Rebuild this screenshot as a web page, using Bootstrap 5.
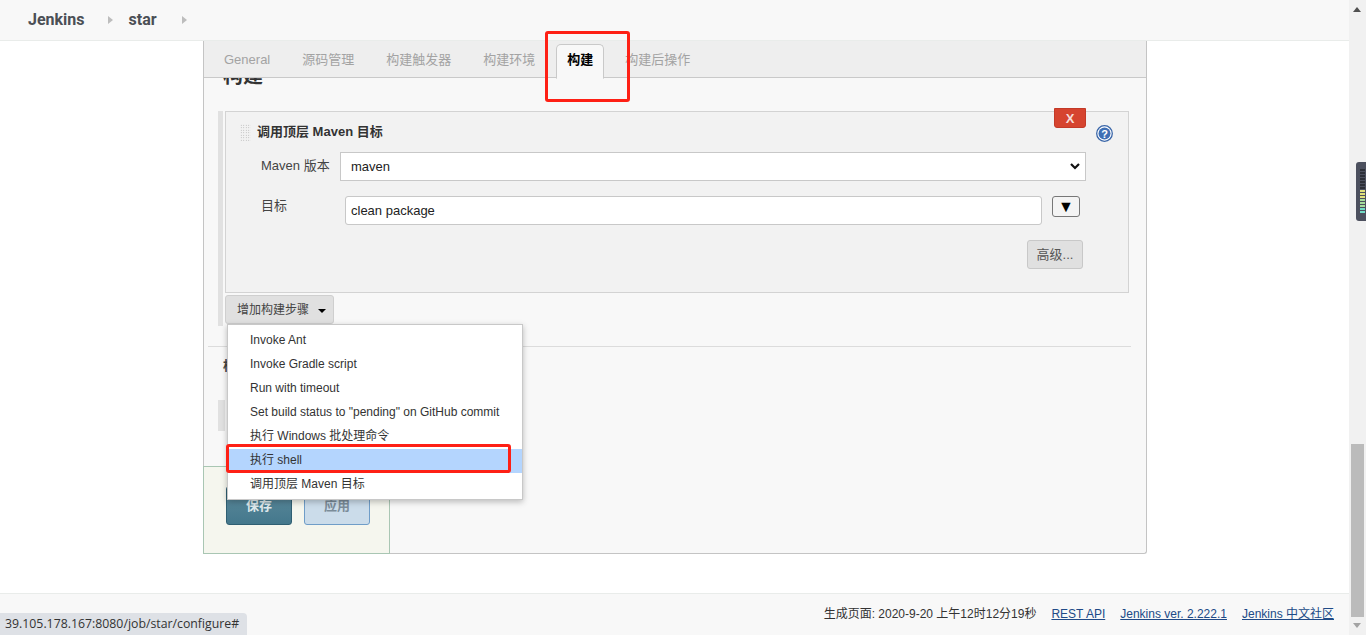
<!DOCTYPE html>
<html lang="zh"><head><meta charset="utf-8"><title>Jenkins</title>
<link href="https://cdn.jsdelivr.net/npm/bootstrap@5.3.0/dist/css/bootstrap.min.css" rel="stylesheet">
<style>
html,body{height:635px;overflow:hidden}
body{font-family:"Liberation Sans","Noto Sans CJK SC",sans-serif;font-size:13px;color:#333;background:#fff;position:relative}
.pg{width:1349px;height:635px}
.topbar{height:41px;background:#f8f8f8;border-bottom:1px solid #e9ecea;padding:0 0 0 28px;flex-wrap:nowrap;justify-content:flex-start;align-items:center;gap:0}
.crumb{font-family:Roboto,"Liberation Sans",sans-serif;font-weight:700;font-size:16px;color:#4b4f55}
.tri{width:0;height:0;border-left:5px solid #bdbdbd;border-top:4px solid transparent;border-bottom:4px solid transparent}
.crumb-gap-a{margin-left:23px}
.crumb-gap-b{margin-left:16px}
.crumb-gap-c{margin-left:25px}
.wrap{padding-left:203px}
.panel-main{width:944px;height:513px;background:#f8f8f8;border:1px solid #c4c4c4;border-top:0;border-radius:0 0 3px 3px;position:relative}
.tabsbar{height:37px;background:#eee;border-bottom:1px solid #c9c9c9;padding-left:4px;padding-top:3px;flex-wrap:nowrap;position:relative;z-index:2;gap:0}
.tabsbar .nav-link{height:34px;padding:7px 16px 0;font-size:13px;line-height:18px;color:#a3a3a3;border:0;background:transparent;border-radius:0;margin:0}
.tabsbar .nav-link.active{color:#000;font-weight:700;background:#f8f8f8;border:1px solid #c9c9c9;border-bottom:1px solid #f8f8f8;border-radius:5px 5px 0 0;padding:6px 10px 0;margin:0 5px -1px 5px;height:35px}
.sec-head{font-size:20px;font-weight:700;color:#333;margin:-14px 0 0 19px;line-height:24px;height:24px;overflow:visible}
.step-rail{margin:23px 0 0 14px;border-left:5px solid #e1e1e1;height:215px;padding-left:2px}
.step-box{width:904px;height:182px;background:#f2f2f2;border:1px solid #d3d3d3;padding:11px 0 0 14px}
.step-title{font-weight:700;font-size:13px;color:#333;gap:6px;height:18px;line-height:18px}
.grip{width:11px;height:17px;background-image:radial-gradient(#aaa 0.7px,transparent 0.8px);background-size:2.5px 2.5px}
.field-lbl{padding-left:21px;color:#444;font-size:13px;line-height:18px;width:100px}
.sel-mv{width:746px;height:29px;border:1px solid #c8c8c8;border-radius:0;padding:0 10px;font-size:13px;color:#222;background-image:url("data:image/svg+xml,%3csvg xmlns='http://www.w3.org/2000/svg' viewBox='0 0 10 7'%3e%3cpath fill='none' stroke='%23111' stroke-width='2.2' d='M1 1l4 4 4-4'/%3e%3c/svg%3e");background-position:right 5px center;background-size:10px 7px;box-shadow:none}
.inp-goal{width:697px;height:29px;border:1px solid #c8c8c8;border-radius:3px;padding:0 5px;margin-left:5px;font-size:13px;color:#222}
.mini-btn{width:28px;height:21px;border:1px solid #777;border-radius:3px;background:#f4f4f4;margin-left:10px;padding:0;line-height:18px;font-size:16px;color:#000}
.adv-btn{width:56px;height:29px;background:#e0e0e0;border:1px solid #c8c8c8;border-radius:3px;padding:0;font-size:13px;color:#555}
.add-btn{width:109px;height:29px;margin-top:2px;background:#e0e0e0;border:1px solid #cfcfcf;border-radius:3px;padding:0 0 0 4px;font-size:12px;color:#444}
.add-btn::after{margin-left:9px;vertical-align:1px;color:#000;border-top-width:4px;border-left-width:4px;border-right-width:4px;border-bottom:0}
.hr-line{height:1px;background:#dcdcdc;margin:20px 15px 0 4px}
.cut-char{font-size:13px;font-weight:700;color:#444;margin:11px 0 0 19px;line-height:16px;height:16px}
.rail2{width:7px;height:31px;margin:26px 0 0 14px;background:#e1e1e1}
.save-area{width:187px;height:88px;margin:35px 0 0 -1px;background:#f5f6ee;border:1px solid #a9c6b3;padding:19px 0 0 22px;gap:12px}
.save-btn{width:66px;height:39px;padding:0;border-radius:3px;font-size:13px;font-weight:700}
.b-save{background:linear-gradient(#5d8a9c,#44788c);border:1px solid #2f5f72;color:#dfe9ec}
.b-apply{background:#cbdcea;border:1px solid #6f9dc8;color:#7b8c99}
.x-btn{position:absolute;left:850px;top:67px;width:32px;height:20px;background:#d6442f;border:1px solid #c33a28;border-radius:0 0 3px 3px;color:#f6dcd8;font-weight:700;font-size:13px;padding:0;line-height:17px}
.help-ico{position:absolute;left:892px;top:84px}
.step-menu{position:absolute;left:227px;top:324px;width:296px;height:176px;padding:4px 0;margin:0;border:1px solid #c8c8c8;border-radius:0;box-shadow:0 2px 6px rgba(0,0,0,.25);background:#fff;display:block;z-index:5;font-size:12px}
.step-menu .dropdown-item{height:24px;line-height:22px;padding:0 0 0 22px;font-size:12px;color:#333;white-space:nowrap}
.step-menu .dropdown-item.active{background:#b4d5fe;color:#333}
.note-box{position:absolute;border:3px solid #fe2015;border-radius:3px;z-index:6;pointer-events:none}
.n-tab{left:545px;top:31px;width:85px;height:71px}
.n-shell{left:226px;top:444px;width:285px;height:29px}
.foot-bar{height:42px;background:#f8f8f8;border-top:1px solid #e9ecea;padding:0 15px 2px 0;gap:15px;font-size:12px;color:#333;margin-top:39px}
.foot-bar a{color:#204a87}
.url-tip{position:absolute;left:0;top:613px;width:247px;height:22px;background:#dee1e6;border-radius:0 4px 0 0;padding-left:5px;font-family:"Open Sans","Noto Sans",sans-serif;font-size:12.3px;line-height:22px;color:#333;z-index:7}
.rail-sb{position:absolute;left:1349px;top:0;width:17px;height:635px;background:#f1f1f1}
.rail-up,.rail-dn{position:absolute;left:4px;width:0;height:0;border-left:4px solid transparent;border-right:4px solid transparent}
.rail-up{top:7px;border-bottom:5px solid #505050;left:4px}
.rail-dn{top:623px;border-top:5px solid #a3a3a3}
.rail-thumb{position:absolute;left:2px;top:444px;width:13px;height:173px;background:#bbb}
.meter{position:absolute;left:1356px;top:162px;width:10px;height:59px;background:#4c505e;border-radius:3px 0 0 3px;z-index:8;padding:7px 0 0 4px}
.meter i{display:block;width:5px;height:2px;margin-bottom:1px;background:#2d3038}
.meter i.y{background:#dfe07a}.meter i.g{background:#a6dc9c}.meter i.t{background:#72dcc6}
</style></head>
<body>
<div class="pg d-flex flex-column">
  <nav class="navbar topbar">
    <span class="crumb">Jenkins</span><span class="tri crumb-gap-a"></span>
    <span class="crumb crumb-gap-b">star</span><span class="tri crumb-gap-c"></span>
  </nav>
  <div class="wrap">
    <div class="panel-main">
      <ul class="nav tabsbar">
        <li class="nav-item"><a class="nav-link" href="#">General</a></li>
        <li class="nav-item"><a class="nav-link" href="#">源码管理</a></li>
        <li class="nav-item"><a class="nav-link" href="#">构建触发器</a></li>
        <li class="nav-item"><a class="nav-link" href="#">构建环境</a></li>
        <li class="nav-item"><a class="nav-link active" href="#">构建</a></li>
        <li class="nav-item"><a class="nav-link" href="#">构建后操作</a></li>
      </ul>
      <div class="sec-head">构建</div>
      <div class="step-rail">
        <div class="step-box">
          <div class="d-flex align-items-center step-title"><span class="grip"></span><span>调用顶层 Maven 目标</span></div>
          <div class="d-flex align-items-start" style="margin-top:11px">
            <label class="field-lbl" style="padding-top:5px">Maven 版本</label>
            <select class="form-select sel-mv"><option>maven</option></select>
          </div>
          <div class="d-flex align-items-start" style="margin-top:15px">
            <label class="field-lbl" style="padding-top:1px">目标</label>
            <input class="form-control inp-goal" value="clean package">
            <button class="btn mini-btn" type="button">▼</button>
          </div>
          <div class="d-flex justify-content-end" style="margin-top:15px;width:843px">
            <button class="btn adv-btn" type="button">高级...</button>
          </div>
        </div>
        <button class="btn add-btn dropdown-toggle" type="button">增加构建步骤</button>
      </div>
      <div class="hr-line"></div>
      <div class="cut-char">构</div>
      <div class="rail2"></div>
      <div class="d-flex save-area">
        <button class="btn save-btn b-save" type="button">保存</button>
        <button class="btn save-btn b-apply" type="button">应用</button>
      </div>
      <button class="btn x-btn" type="button">X</button>
      <svg class="help-ico" width="17" height="17" viewBox="0 0 17 17"><circle cx="8.5" cy="8.5" r="7.8" fill="#fff" stroke="#3a66a8" stroke-width="1.3"/><circle cx="8.5" cy="8.5" r="6" fill="#3f6fb5"/><text x="8.5" y="12.5" text-anchor="middle" font-family="Liberation Sans" font-weight="700" font-size="11" fill="#fff">?</text></svg>
    </div>
  </div>
  <footer class="d-flex justify-content-end align-items-center foot-bar">
    <span>生成页面: 2020-9-20 上午12时12分19秒</span>
    <a href="#">REST API</a><a href="#">Jenkins ver. 2.222.1</a><a href="#">Jenkins 中文社区</a>
  </footer>
</div>
<ul class="dropdown-menu step-menu list-unstyled">
  <li><a class="dropdown-item" href="#">Invoke Ant</a></li>
  <li><a class="dropdown-item" href="#">Invoke Gradle script</a></li>
  <li><a class="dropdown-item" href="#">Run with timeout</a></li>
  <li><a class="dropdown-item" href="#">Set build status to "pending" on GitHub commit</a></li>
  <li><a class="dropdown-item" href="#">执行 Windows 批处理命令</a></li>
  <li><a class="dropdown-item active" href="#">执行 shell</a></li>
  <li><a class="dropdown-item" href="#">调用顶层 Maven 目标</a></li>
</ul>
<div class="note-box n-tab"></div>
<div class="note-box n-shell"></div>
<div class="url-tip">39.105.178.167:8080/job/star/configure#</div>
<div class="rail-sb"><span class="rail-up"></span><span class="rail-thumb"></span><span class="rail-dn"></span></div>
<div class="meter"><i></i><i></i><i></i><i></i><i></i><i></i><i></i><i class="y"></i><i class="y"></i><i class="y"></i><i class="g"></i><i class="g"></i><i class="g"></i><i class="t"></i><i class="t"></i></div>
<script src="https://cdn.jsdelivr.net/npm/bootstrap@5.3.0/dist/js/bootstrap.bundle.min.js"></script>
</body></html>
